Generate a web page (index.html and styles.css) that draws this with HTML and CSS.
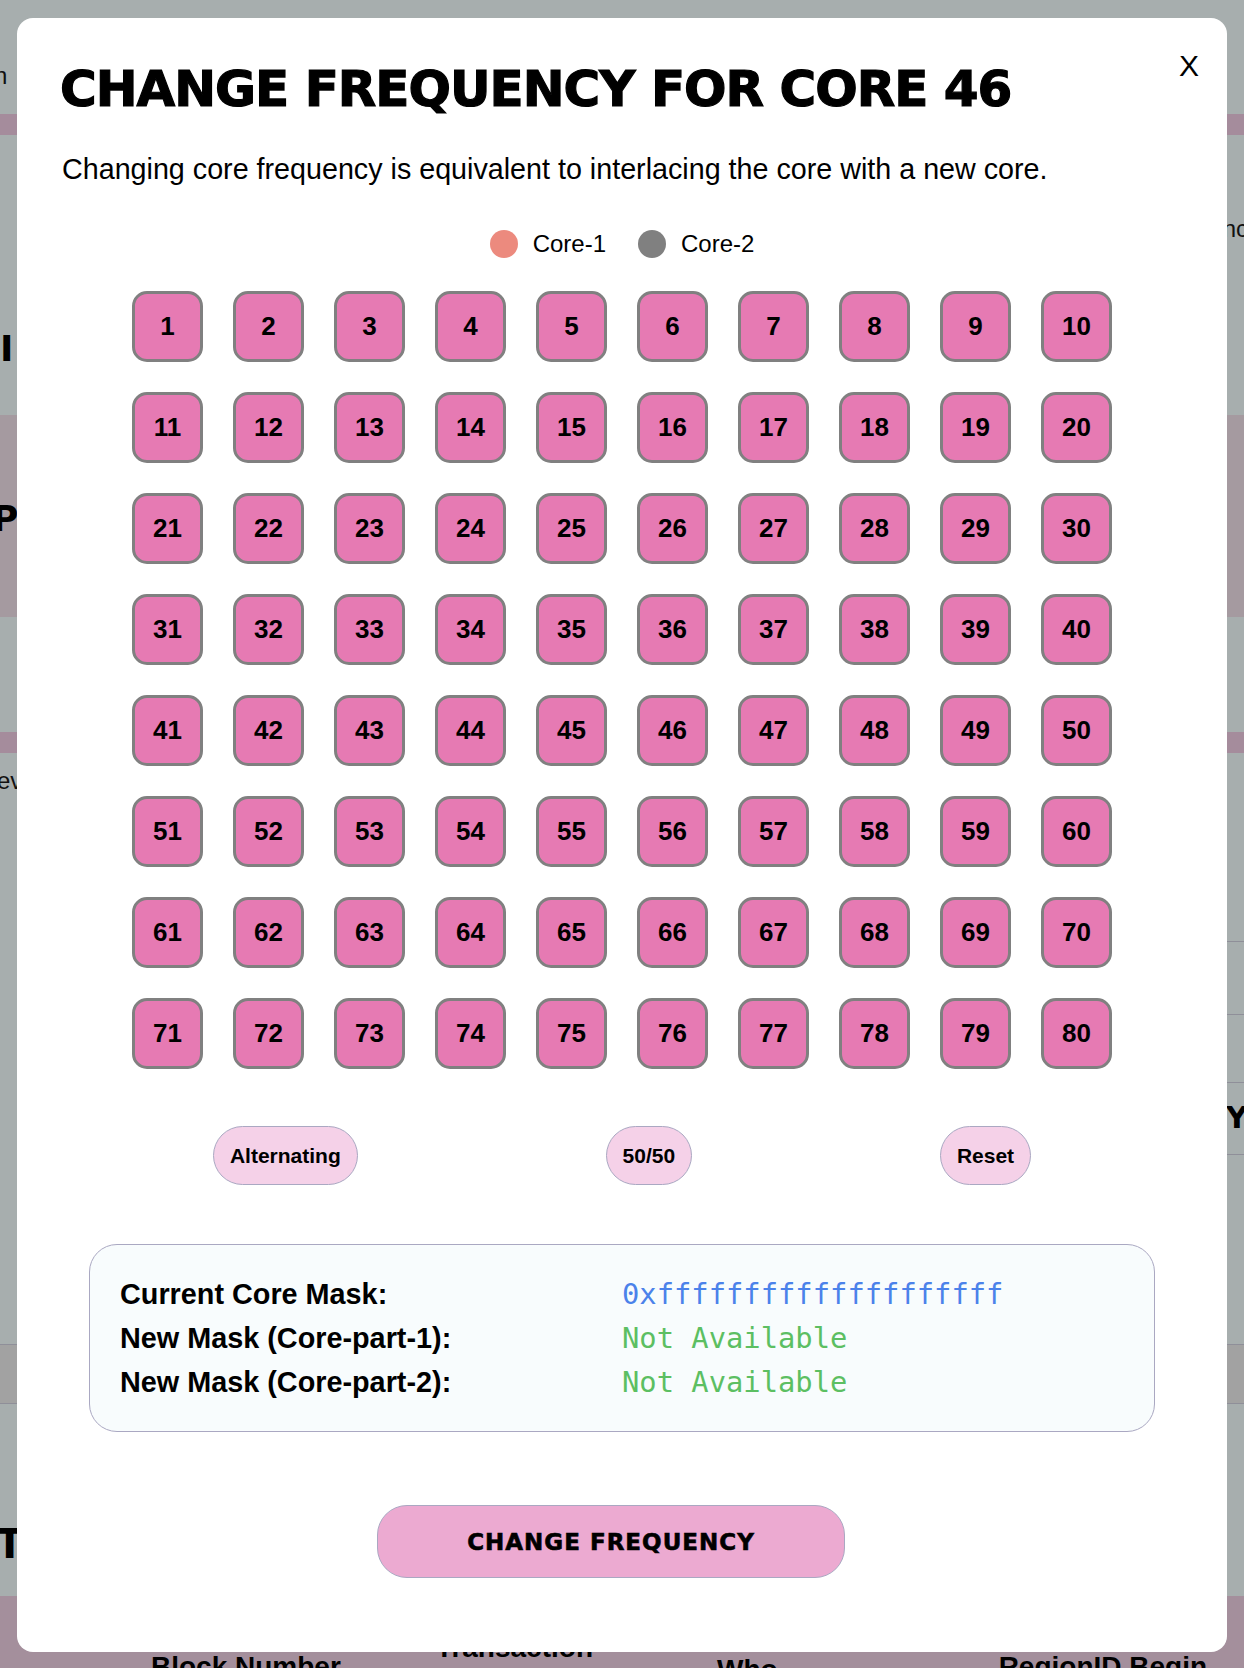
FILE: index.html
```html
<!DOCTYPE html>
<html lang="en">
<head>
<meta charset="utf-8">
<title>Change Frequency</title>
<link rel="stylesheet" href="styles.css">
</head>
<body>
<div class="page">
  <div class="row row-a"><span class="edge-l cut">n</span></div>
  <div class="row band-pink"></div>
  <div class="row row-c">
    <span class="edge-l heading h-i">I</span>
    <span class="edge-r txt nc">nc</span>
  </div>
  <div class="row row-d"><span class="edge-l heading h-p">P</span></div>
  <div class="row row-e"></div>
  <div class="row band-pink"></div>
  <div class="row row-g"><span class="edge-l txt ev">ev</span></div>
  <div class="row row-line r1"><span class="rcell"></span></div>
  <div class="row row-line r2"><span class="rcell"></span></div>
  <div class="row row-line r3"><span class="rcell y"><span class="heading ytxt">Y</span></span></div>
  <div class="row row-line r4"><span class="rcell"></span></div>
  <div class="row row-tbl"></div>
  <div class="row row-t"><span class="edge-l heading h-t">T</span></div>
  <div class="row row-head">
    <span class="col-h c1">Block Number</span>
    <span class="col-h c2">Transaction</span>
    <span class="col-h c3">Who</span>
    <span class="col-h c4">RegionID Begin</span>
  </div>
</div>

<div class="modal">
  <button class="close">X</button>
  <h1 class="title">CHANGE FREQUENCY FOR CORE 46</h1>
  <p class="subtitle">Changing core frequency is equivalent to interlacing the core with a new core.</p>
  <div class="legend">
    <span class="dot dot-1"></span><span class="legend-label">Core-1</span>
    <span class="dot dot-2"></span><span class="legend-label">Core-2</span>
  </div>
  <div class="grid" id="grid">
    <button class="core">1</button><button class="core">2</button><button class="core">3</button><button class="core">4</button><button class="core">5</button><button class="core">6</button><button class="core">7</button><button class="core">8</button><button class="core">9</button><button class="core">10</button>
    <button class="core">11</button><button class="core">12</button><button class="core">13</button><button class="core">14</button><button class="core">15</button><button class="core">16</button><button class="core">17</button><button class="core">18</button><button class="core">19</button><button class="core">20</button>
    <button class="core">21</button><button class="core">22</button><button class="core">23</button><button class="core">24</button><button class="core">25</button><button class="core">26</button><button class="core">27</button><button class="core">28</button><button class="core">29</button><button class="core">30</button>
    <button class="core">31</button><button class="core">32</button><button class="core">33</button><button class="core">34</button><button class="core">35</button><button class="core">36</button><button class="core">37</button><button class="core">38</button><button class="core">39</button><button class="core">40</button>
    <button class="core">41</button><button class="core">42</button><button class="core">43</button><button class="core">44</button><button class="core">45</button><button class="core">46</button><button class="core">47</button><button class="core">48</button><button class="core">49</button><button class="core">50</button>
    <button class="core">51</button><button class="core">52</button><button class="core">53</button><button class="core">54</button><button class="core">55</button><button class="core">56</button><button class="core">57</button><button class="core">58</button><button class="core">59</button><button class="core">60</button>
    <button class="core">61</button><button class="core">62</button><button class="core">63</button><button class="core">64</button><button class="core">65</button><button class="core">66</button><button class="core">67</button><button class="core">68</button><button class="core">69</button><button class="core">70</button>
    <button class="core">71</button><button class="core">72</button><button class="core">73</button><button class="core">74</button><button class="core">75</button><button class="core">76</button><button class="core">77</button><button class="core">78</button><button class="core">79</button><button class="core">80</button>
  </div>
  <div class="actions">
    <button class="pill">Alternating</button>
    <button class="pill">50/50</button>
    <button class="pill">Reset</button>
  </div>
  <div class="mask-box">
    <div class="mask-label">Current Core Mask:</div>
    <div class="mask-value blue">0xffffffffffffffffffff</div>
    <div class="mask-label">New Mask (Core-part-1):</div>
    <div class="mask-value green">Not Available</div>
    <div class="mask-label">New Mask (Core-part-2):</div>
    <div class="mask-value green">Not Available</div>
  </div>
  <div class="submit-row">
    <button class="submit">CHANGE FREQUENCY</button>
  </div>
</div>
</body>
</html>
```
FILE: styles.css
```css
* { box-sizing: border-box; }
html, body { margin: 0; padding: 0; }
body {
  width: 1244px;
  height: 1668px;
  overflow: hidden;
  background: #a7aeae;
  font-family: "Liberation Sans", Arial, sans-serif;
  color: #000;
}

/* ---------- background page (under overlay) ---------- */
.page {
  display: flex;
  flex-direction: column;
  height: 1668px;
  overflow: hidden;
}
.row {
  display: flex;
  justify-content: space-between;
  align-items: flex-start;
  flex: none;
  overflow: hidden;
}
.row-a { height: 114px; padding-top: 62px; }
.band-pink { height: 21px; background: #a58c9c; }
.row-c { height: 280px; }
.row-d { height: 202px; background: #a59aa0; }
.row-e { height: 115px; }
.row-g { height: 188px; }
.row-line { justify-content: flex-end; }
.r1 { height: 73px; }
.r2 { height: 68px; }
.r3 { height: 72px; }
.r4 { height: 190px; }
.rcell {
  display: block;
  width: 30px;
  height: 100%;
  border-top: 1px solid #8f8f99;
}
.rcell.y { padding-top: 20px; }
.row-tbl { height: 60px; background: #a2a2a2; border-top: 1px solid #8f8f99; border-bottom: 1px solid #8f8f99; }
.row-t { height: 192px; }
.row-head { height: 72px; background: #a48f9c; justify-content: flex-start; }

.edge-l { margin-left: -6px; }
.edge-r { margin-right: -4px; }
.cut { font-size: 24px; color: #111; }
.txt { font-size: 24px; color: #111; }
.heading { font-family: "DejaVu Sans", sans-serif; font-weight: bold; font-size: 36px; color: #000; line-height: 1; }
.h-i { margin-top: 196px; margin-left: 0; }
.nc { margin-top: 80px; }
.h-p { margin-top: 86px; margin-left: -8px; }
.ev { margin-top: 14px; margin-left: -3px; }
.ytxt { font-size: 30px; margin-left: 12px; }
.h-t { margin-top: 120px; margin-left: -4px; font-size: 40px; }
.col-h { font-weight: bold; font-size: 28px; line-height: 1; }
.c1 { margin-left: 151px; margin-top: 57px; }
.c2 { margin-left: 95px; margin-top: 38px; }
.c3 { margin-left: 124px; margin-top: 60px; }
.c4 { margin-left: 221px; margin-top: 57px; }

/* ---------- modal ---------- */
.modal {
  position: fixed;
  left: 17px;
  top: 18px;
  width: 1210px;
  height: 1634px;
  background: #fff;
  border-radius: 16px;
  padding: 42px 45px 0;
  display: flex;
  flex-direction: column;
}
.close {
  position: absolute;
  top: 33px;
  right: 28px;
  background: none;
  border: 0;
  padding: 0;
  font-family: "Liberation Sans", Arial, sans-serif;
  font-size: 30px;
  line-height: 30px;
  color: #000;
}
.title {
  margin: 0 0 0 -2px;
  font-family: "DejaVu Sans", sans-serif;
  font-weight: bold;
  font-size: 50px;
  line-height: 58px;
  letter-spacing: -1px;
  -webkit-text-stroke: 1.2px #000;
  white-space: nowrap;
}
.subtitle {
  margin: 34px 0 0;
  font-size: 28.7px;
  line-height: 34px;
  white-space: nowrap;
}
.legend {
  margin-top: 44px;
  display: flex;
  justify-content: center;
  align-items: center;
  height: 28px;
  font-size: 24px;
}
.dot {
  width: 28px;
  height: 28px;
  border-radius: 50%;
  margin-right: 15px;
}
.dot-1 { background: #ec8a7e; }
.dot-2 { background: #808080; margin-left: 32px; }
.legend-label { line-height: 28px; }

.grid {
  margin-top: 33px;
  display: grid;
  grid-template-columns: repeat(10, 71px);
  grid-auto-rows: 71px;
  gap: 30px;
  justify-content: center;
}
.core {
  width: 71px;
  height: 71px;
  background: #e67ab3;
  border: 3px solid #808080;
  border-radius: 15px;
  font-family: "Liberation Sans", Arial, sans-serif;
  font-weight: bold;
  font-size: 26px;
  color: #000;
  padding: 0;
}

.actions {
  margin: 57px 27px 0;
  display: flex;
  justify-content: space-around;
}
.pill {
  height: 59px;
  padding: 0 16px;
  background: #f5d1e8;
  border: 1px solid #aaa8c2;
  border-radius: 30px;
  font-family: "Liberation Sans", Arial, sans-serif;
  font-weight: bold;
  font-size: 21px;
  color: #000;
}

.mask-box {
  margin: 59px 27px 0;
  height: 188px;
  padding: 27px 30px 0;
  background: #f8fcfd;
  border: 1px solid #aaa8c2;
  border-radius: 28px;
  display: grid;
  grid-template-columns: 1fr 1fr;
  grid-auto-rows: 44px;
  align-content: start;
}
.mask-label {
  font-weight: bold;
  font-size: 28.8px;
  line-height: 44px;
  white-space: nowrap;
}
.mask-value {
  font-family: "DejaVu Sans Mono", monospace;
  font-size: 28.8px;
  line-height: 44px;
  white-space: nowrap;
}
.blue { color: #4b82ea; }
.green { color: #5cbf62; }

.submit-row {
  margin-top: 73px;
  display: flex;
  justify-content: center;
  padding-right: 22px;
}
.submit {
  width: 468px;
  height: 73px;
  background: #ecaad1;
  border: 1px solid #aaa8c2;
  border-radius: 30px;
  font-family: "DejaVu Sans", sans-serif;
  font-weight: bold;
  font-size: 23px;
  letter-spacing: 1px;
  -webkit-text-stroke: 0.6px #000;
  color: #000;
  padding: 0;
}
```
